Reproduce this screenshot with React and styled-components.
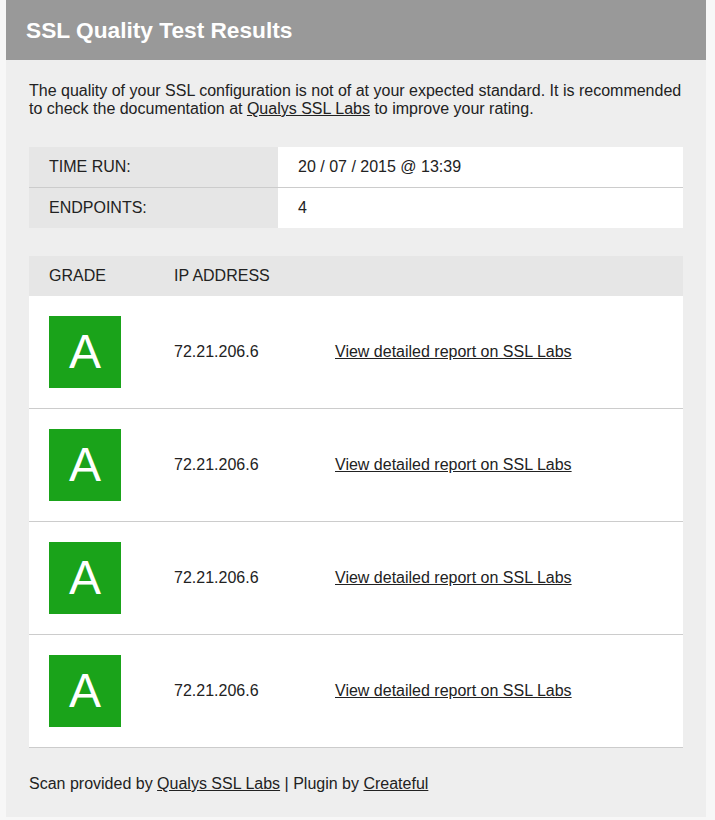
import React from "react";
import styled, { createGlobalStyle } from "styled-components";

const Global = createGlobalStyle`
  html, body { margin: 0; padding: 0; background: #f7f7f7; }
  body { font-family: "Liberation Sans", Arial, Helvetica, sans-serif; color: #222; }
`;

const Card = styled.div`
  width: 700px;
  margin-left: 6px;
  background: #eeeeee;
`;

const Header = styled.header`
  height: 60px;
  background: #999999;
  display: flex;
  align-items: center;
  padding-left: 20px;
`;

const Title = styled.h1`
  margin: 0;
  font-size: 22.7px;
  font-weight: bold;
  color: #fff;
`;

const Body = styled.div`
  padding: 22px 23px 24px;
`;

const Intro = styled.p`
  margin: 0 0 29px;
  font-size: 16px;
  line-height: 18px;
`;

const Link = styled.a`
  color: #222;
  text-decoration: underline;
`;

const InfoTable = styled.div`
  display: grid;
  grid-template-columns: 249px 1fr;
  margin-bottom: 28px;
`;

const InfoCell = styled.div`
  box-sizing: border-box;
  display: flex;
  align-items: center;
  padding-left: 20px;
  font-size: 16px;
  background: ${(p) => (p.$label ? "#e6e6e6" : "#fff")};
  border-bottom: ${(p) => (p.$divider ? "1px solid #cccccc" : "none")};
  height: ${(p) => (p.$divider ? "41px" : "40px")};
`;

const GradeTable = styled.div`
  display: flex;
  flex-direction: column;
  margin-bottom: 27px;
`;

const GradeHead = styled.div`
  display: grid;
  grid-template-columns: 125px 161px 1fr;
  height: 40px;
  align-items: center;
  padding-left: 20px;
  background: #e6e6e6;
  font-size: 16px;
`;

const GradeRow = styled.div`
  display: grid;
  grid-template-columns: 125px 161px 1fr;
  align-items: center;
  background: #fff;
  padding: 20px 0 20px 20px;
  border-bottom: 1px solid #cccccc;
  font-size: 16px;
`;

const GradeBox = styled.div`
  width: 72px;
  height: 72px;
  background: #1aa31a;
  color: #fff;
  font-size: 48px;
  display: flex;
  align-items: center;
  justify-content: center;
  line-height: 1;
`;

const Footer = styled.p`
  margin: 0;
  font-size: 16px;
  line-height: 18px;
`;

const rows = ["72.21.206.6", "72.21.206.6", "72.21.206.6", "72.21.206.6"];

export default function App() {
  return (
    <>
      <Global />
      <Card>
        <Header>
          <Title>SSL Quality Test Results</Title>
        </Header>
        <Body>
          <Intro>
            The quality of your SSL configuration is not of at your expected standard. It is recommended
            to check the documentation at <Link href="#">Qualys SSL Labs</Link> to improve your rating.
          </Intro>
          <InfoTable>
            <InfoCell $label $divider>TIME RUN:</InfoCell>
            <InfoCell $divider>20 / 07 / 2015 @ 13:39</InfoCell>
            <InfoCell $label>ENDPOINTS:</InfoCell>
            <InfoCell>4</InfoCell>
          </InfoTable>
          <GradeTable>
            <GradeHead>
              <span>GRADE</span>
              <span>IP ADDRESS</span>
              <span></span>
            </GradeHead>
            {rows.map((ip, i) => (
              <GradeRow key={i}>
                <GradeBox>A</GradeBox>
                <span>{ip}</span>
                <span><Link href="#">View detailed report on SSL Labs</Link></span>
              </GradeRow>
            ))}
          </GradeTable>
          <Footer>
            Scan provided by <Link href="#">Qualys SSL Labs</Link> | Plugin by <Link href="#">Createful</Link>
          </Footer>
        </Body>
      </Card>
    </>
  );
}
